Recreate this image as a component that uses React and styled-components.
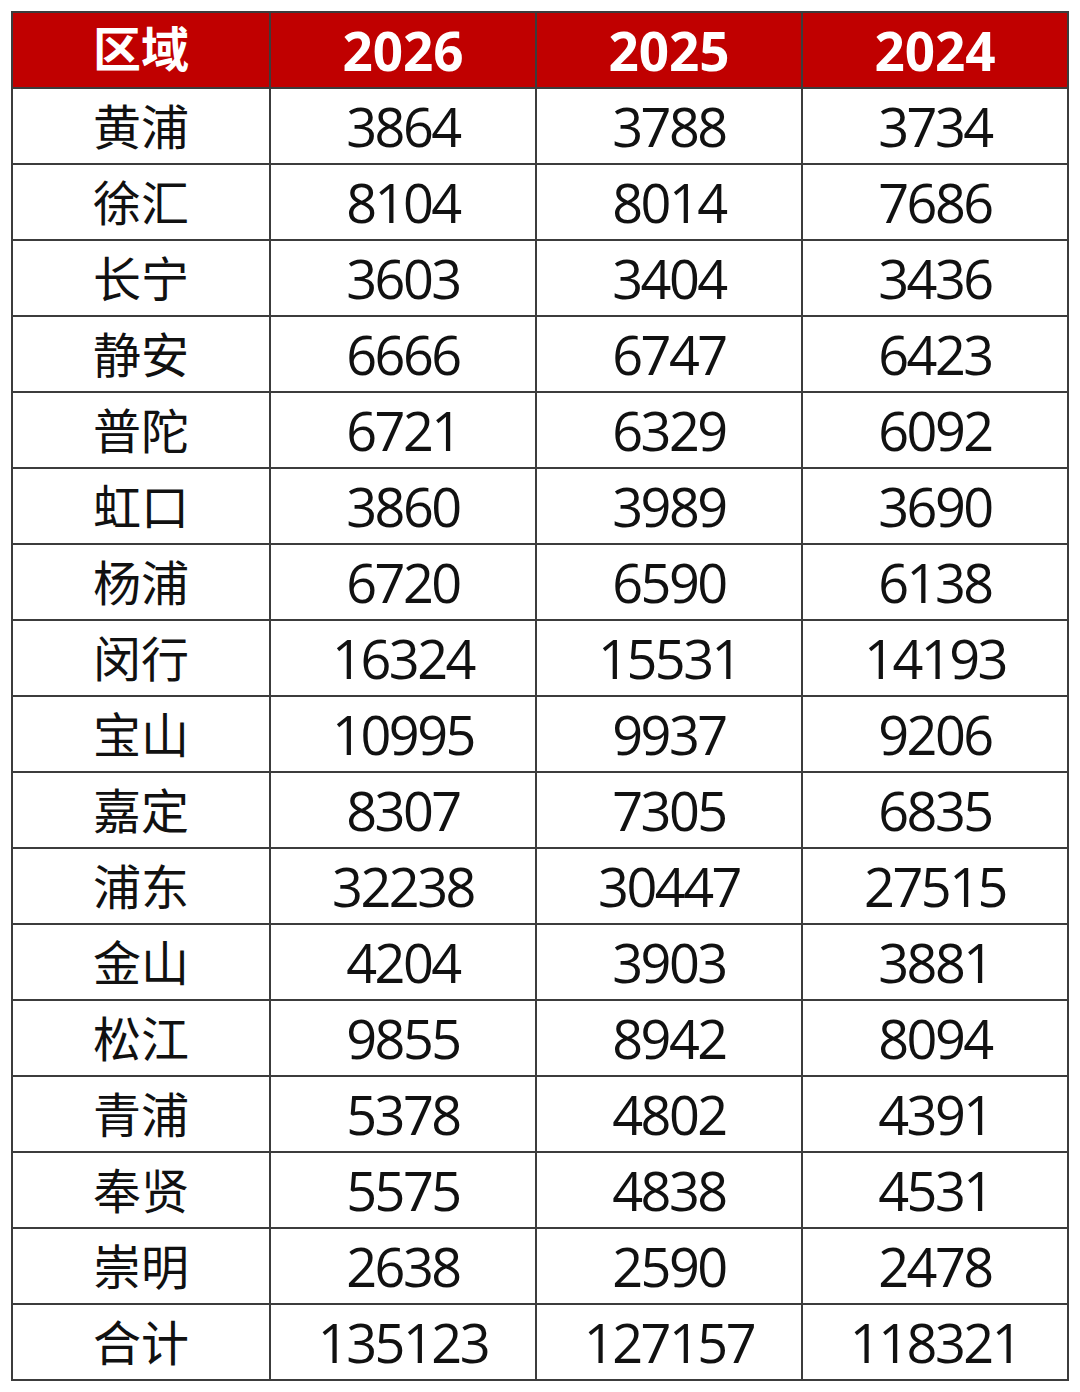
import { Fragment } from "react";
import styled, { createGlobalStyle } from "styled-components";

const GlobalStyle = createGlobalStyle`
    html, body {
        margin: 0;
        padding: 0;
        background: #ffffff;
    }
`

const rows = [
    ["黄浦", "3864", "3788", "3734"],
    ["徐汇", "8104", "8014", "7686"],
    ["长宁", "3603", "3404", "3436"],
    ["静安", "6666", "6747", "6423"],
    ["普陀", "6721", "6329", "6092"],
    ["虹口", "3860", "3989", "3690"],
    ["杨浦", "6720", "6590", "6138"],
    ["闵行", "16324", "15531", "14193"],
    ["宝山", "10995", "9937", "9206"],
    ["嘉定", "8307", "7305", "6835"],
    ["浦东", "32238", "30447", "27515"],
    ["金山", "4204", "3903", "3881"],
    ["松江", "9855", "8942", "8094"],
    ["青浦", "5378", "4802", "4391"],
    ["奉贤", "5575", "4838", "4531"],
    ["崇明", "2638", "2590", "2478"],
    ["合计", "135123", "127157", "118321"],
]

const Page = styled.div`
    padding: 11px;
`

const Grid = styled.div`
    display: grid;
    grid-template-columns: 258px 266px 266px 266px;
    grid-auto-rows: 76px;
    width: 1056px;
    border-left: 2px solid #3c3c3c;
    border-top: 2px solid #3c3c3c;
    font-family: "Open Sans", "Noto Sans CJK SC", sans-serif;
    color: #111111;
`

const Head = styled.div`
    display: flex;
    align-items: center;
    justify-content: center;
    background: #c00000;
    color: #ffffff;
    border-right: 2px solid #3c3c3c;
    border-bottom: 2px solid #3c3c3c;
    font-size: ${(p) => (p.$cjk ? "48px" : "53px")};
    font-weight: 700;
    line-height: 1;
    padding-bottom: ${(p) => (p.$cjk ? "2px" : "0")};
`

const Cell = styled.div`
    display: flex;
    align-items: center;
    justify-content: center;
    border-right: 2px solid #3c3c3c;
    border-bottom: 2px solid #3c3c3c;
    line-height: 1;
    font-size: ${(p) => (p.$cjk ? "48px" : "54px")};
    letter-spacing: ${(p) => (p.$cjk ? "0" : "-2.5px")};
    padding-top: ${(p) => (p.$cjk ? "2px" : "0")};
`

export default function App() {
    return (
        <>
            <GlobalStyle />
            <Page>
                <Grid>
                    <Head $cjk>区域</Head>
                    <Head>2026</Head>
                    <Head>2025</Head>
                    <Head>2024</Head>
                    {rows.map((r) => (
                        <Fragment key={r[0]}>
                            <Cell $cjk>{r[0]}</Cell>
                            <Cell>{r[1]}</Cell>
                            <Cell>{r[2]}</Cell>
                            <Cell>{r[3]}</Cell>
                        </Fragment>
                    ))}
                </Grid>
            </Page>
        </>
    )
}
